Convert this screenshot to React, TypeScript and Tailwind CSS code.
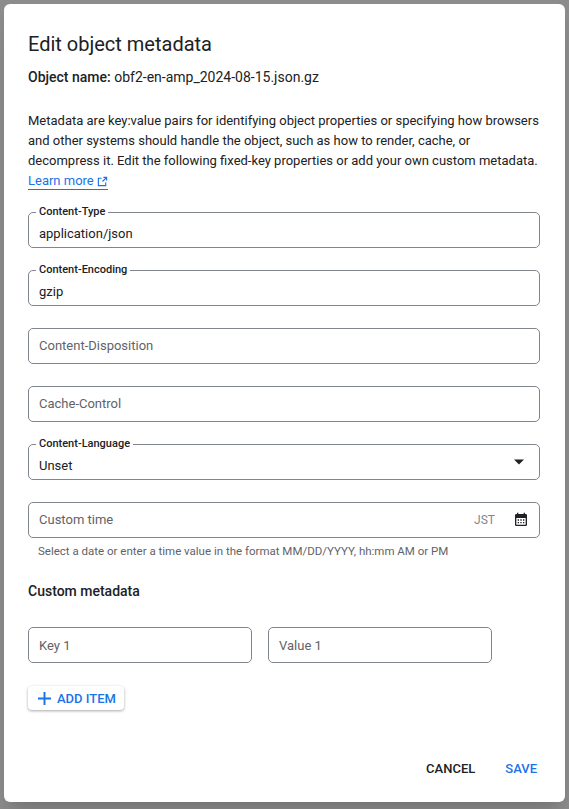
import React from "react"

const Field = ({ label, value, placeholder, right }: { label?: string; value?: string; placeholder?: string; right?: React.ReactNode }) => (
  <div className="relative flex h-9 items-center rounded-[5px] border border-[#80868b] px-[10px]">
    {label && (
      <span className="absolute -top-[7px] left-[7px] bg-white px-[3px] text-[11px] font-medium leading-[12px] text-[#202124]">
        {label}
      </span>
    )}
    <span className={`flex-1 text-[13px] ${value ? "pt-[7px] text-[#202124]" : "text-[#5f6368]"}`}>
      {value || placeholder}
    </span>
    {right}
  </div>
)

const App = () => {
  return (
    <div className="flex min-h-[809px] items-start justify-center bg-[#8c8c8c] pt-[4px]" style={{ fontFamily: "Roboto, 'Liberation Sans', sans-serif" }}>
      <div className="flex h-[798px] w-[561px] flex-col rounded-[6px] bg-white px-6 shadow-xl">
        <h1 className="mt-[28px] text-[20px] leading-[24px] text-[#202124]">Edit object metadata</h1>
        <p className="mt-[11px] text-[14px] text-[#202124]">
          <span className="font-medium">Object name:</span> obf2-en-amp_2024-08-15.json.gz
        </p>
        <p className="mt-[23px] text-[13px] leading-[20px] text-[#202124]">
          Metadata are key:value pairs for identifying object properties or specifying how browsers and other systems should handle the object, such as how to render, cache, or decompress it. Edit the following fixed-key properties or add your own custom metadata.{" "}
          <a className="inline-flex items-center gap-[3px] border-b border-[#1a73e8] leading-[16px] text-[#1a73e8]">
            Learn more
            <svg width="11" height="11" viewBox="0 0 24 24" fill="none" stroke="#1a73e8" strokeWidth="2.5">
              <path d="M14 3h7v7M21 3l-9 9M19 14v7H3V5h7" />
            </svg>
          </a>
        </p>
        <div className="mt-[21px] flex w-[512px] flex-col gap-[22px]">
          <Field label="Content-Type" value="application/json" />
          <Field label="Content-Encoding" value="gzip" />
          <Field placeholder="Content-Disposition" />
          <Field placeholder="Cache-Control" />
          <Field
            label="Content-Language"
            value="Unset"
            right={
              <svg width="10" height="6" viewBox="0 0 10 5" className="mr-[5px]">
                <path d="M0 0h10L5 5z" fill="#202124" />
              </svg>
            }
          />
          <div>
            <Field
              placeholder="Custom time"
              right={
                <div className="flex items-center gap-[18px]">
                  <span className="text-[12px] text-[#80868b]">JST</span>
                  <svg width="16" height="16" viewBox="0 0 24 24">
                    <path fill="#202124" d="M19 3h-1V1h-2v2H8V1H6v2H5a2 2 0 0 0-2 2v14a2 2 0 0 0 2 2h14a2 2 0 0 0 2-2V5a2 2 0 0 0-2-2zm0 16H5V9h14zM7 11h2v2H7zm4 0h2v2h-2zm4 0h2v2h-2zM7 15h2v2H7zm4 0h2v2h-2zm4 0h2v2h-2z" />
                  </svg>
                </div>
              }
            />
            <p className="mt-[5px] pl-[10px] text-[11.5px] text-[#5f6368]">
              Select a date or enter a time value in the format MM/DD/YYYY, hh:mm AM or PM
            </p>
          </div>
        </div>
        <h2 className="mt-[21px] text-[14px] font-medium text-[#202124]">Custom metadata</h2>
        <div className="mt-[25px] flex gap-4">
          <div className="w-[224px]"><Field placeholder="Key 1" /></div>
          <div className="w-[224px]"><Field placeholder="Value 1" /></div>
        </div>
        <div className="mt-[23px]">
          <button className="flex h-6 items-center gap-[6px] rounded-[4px] bg-white pl-[10px] pr-2 text-[13px] font-medium text-[#1a73e8] shadow-[0_1px_3px_rgba(0,0,0,0.35)]">
            <svg width="13" height="13" viewBox="0 0 12 12"><path d="M6 0v12M0 6h12" stroke="#1a73e8" strokeWidth="1.8" /></svg>
            ADD ITEM
          </button>
        </div>
        <div className="mt-auto mb-[24px] flex justify-end gap-[30px] pr-[4px] text-[13px] font-medium">
          <button className="text-[#202124]">CANCEL</button>
          <button className="text-[#1a73e8]">SAVE</button>
        </div>
      </div>
    </div>
  )
}

export default App
